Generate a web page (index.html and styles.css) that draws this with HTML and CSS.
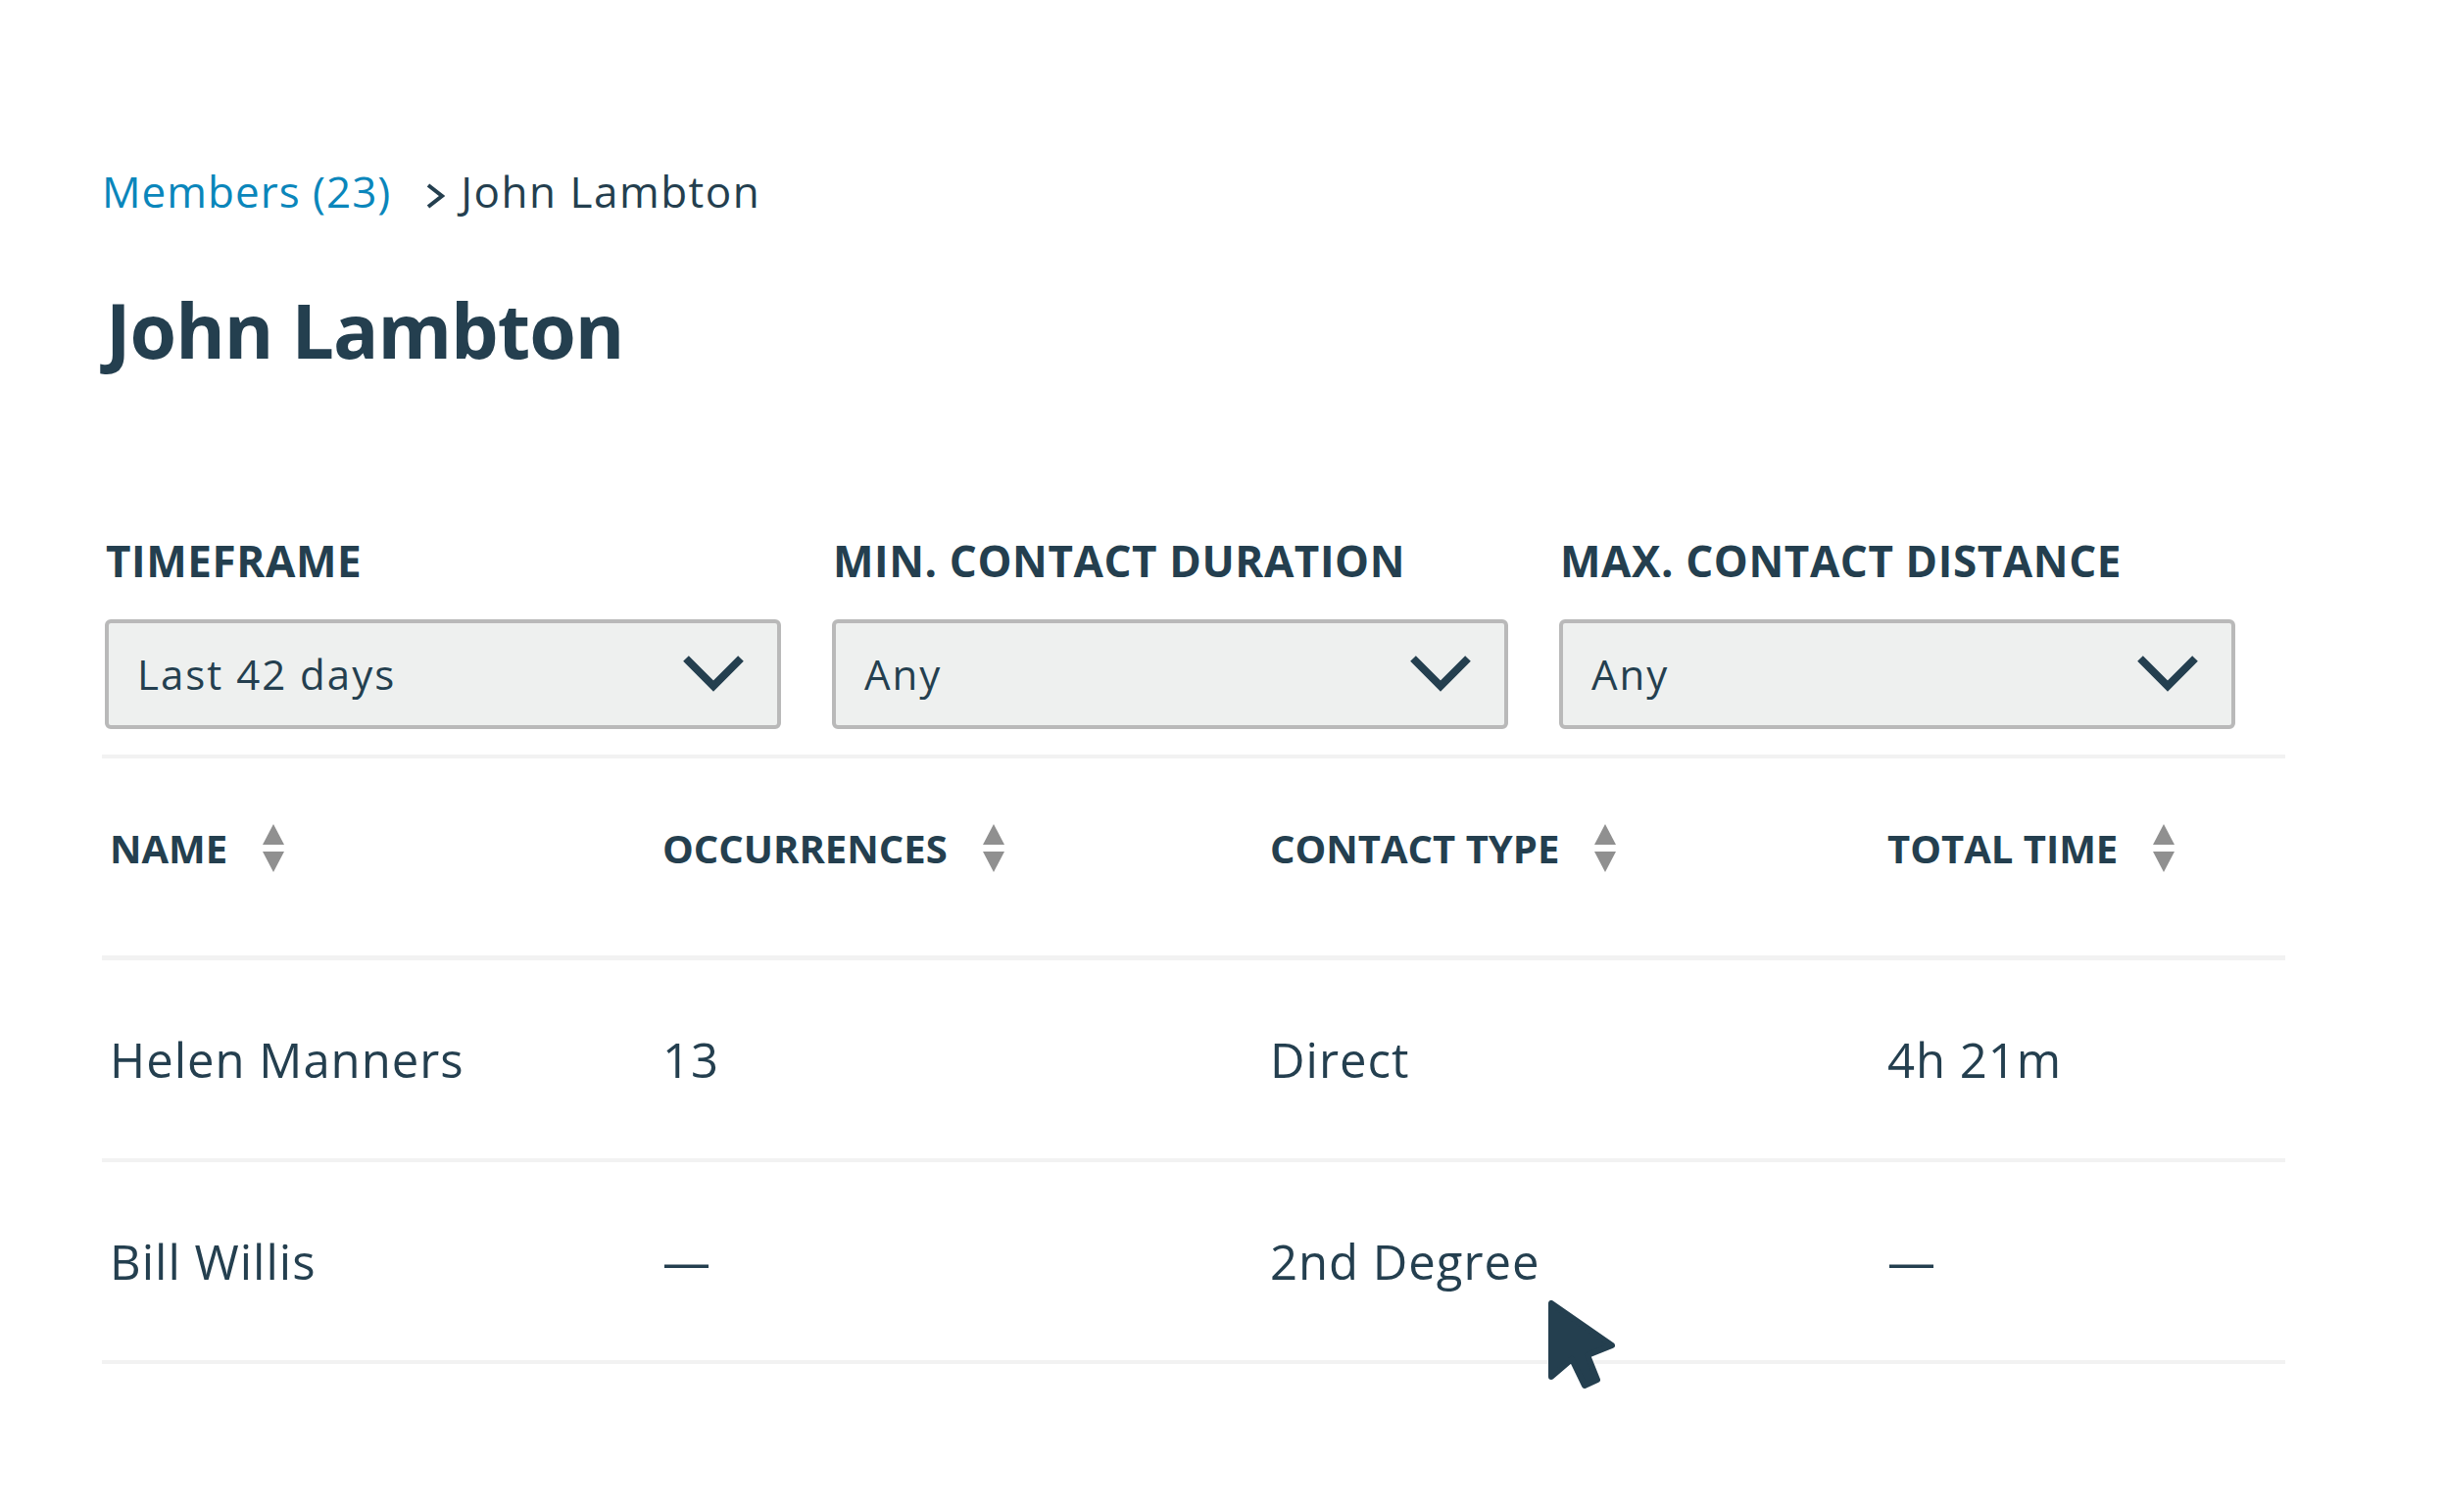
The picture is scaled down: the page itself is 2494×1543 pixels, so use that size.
FILE: index.html
```html
<!DOCTYPE html>
<html lang="en">
<head>
<meta charset="utf-8">
<title>John Lambton</title>
<link rel="stylesheet" href="styles.css">
</head>
<body>
<main class="page">
  <nav class="breadcrumb">
    <a class="crumb-link" href="#">Members (23)</a>
    <svg class="crumb-sep" viewBox="0 0 20 26" aria-hidden="true"><path d="M3 2 L17 13 L3 24"/></svg>
    <span class="crumb-current">John Lambton</span>
  </nav>

  <h1 class="title">John Lambton</h1>

  <section class="filters">
    <div class="filter">
      <div class="filter-label">TIMEFRAME</div>
      <div class="select">
        <span class="select-value">Last 42 days</span>
        <svg class="chevron" viewBox="0 0 62 38" aria-hidden="true"><path d="M3 3 L31 31 L59 3"/></svg>
      </div>
    </div>
    <div class="filter">
      <div class="filter-label">MIN. CONTACT DURATION</div>
      <div class="select">
        <span class="select-value">Any</span>
        <svg class="chevron" viewBox="0 0 62 38" aria-hidden="true"><path d="M3 3 L31 31 L59 3"/></svg>
      </div>
    </div>
    <div class="filter">
      <div class="filter-label">MAX. CONTACT DISTANCE</div>
      <div class="select">
        <span class="select-value">Any</span>
        <svg class="chevron" viewBox="0 0 62 38" aria-hidden="true"><path d="M3 3 L31 31 L59 3"/></svg>
      </div>
    </div>
  </section>

  <div class="table">
    <div class="row head">
      <div class="th">NAME<svg class="sort" viewBox="0 0 22 50" aria-hidden="true"><path d="M11 0 L22 21 L0 21 Z M0 28 L22 28 L11 49 Z"/></svg></div>
      <div class="th">OCCURRENCES<svg class="sort" viewBox="0 0 22 50" aria-hidden="true"><path d="M11 0 L22 21 L0 21 Z M0 28 L22 28 L11 49 Z"/></svg></div>
      <div class="th">CONTACT TYPE<svg class="sort" viewBox="0 0 22 50" aria-hidden="true"><path d="M11 0 L22 21 L0 21 Z M0 28 L22 28 L11 49 Z"/></svg></div>
      <div class="th">TOTAL TIME<svg class="sort" viewBox="0 0 22 50" aria-hidden="true"><path d="M11 0 L22 21 L0 21 Z M0 28 L22 28 L11 49 Z"/></svg></div>
    </div>
    <div class="row">
      <div class="td">Helen Manners</div>
      <div class="td">13</div>
      <div class="td">Direct</div>
      <div class="td">4h 21m</div>
    </div>
    <div class="row">
      <div class="td">Bill Willis</div>
      <div class="td">—</div>
      <div class="td">2nd Degree</div>
      <div class="td">—</div>
    </div>
  </div>

  <svg class="cursor" viewBox="0 0 70 92" aria-hidden="true"><path d="M3 3 L3 78 L24 60 L37 87 L50 81 L40 56 L65 46 Z"/></svg>
</main>
</body>
</html>
```

FILE: styles.css
```css
html, body {
  margin: 0;
  padding: 0;
  background: #ffffff;
}

body {
  font-family: "Open Sans", "Noto Sans", "Liberation Sans", sans-serif;
  color: #243f4f;
}

.page {
  position: relative;
  box-sizing: border-box;
  min-height: 1543px;
  padding: 165px 0 0 104px;
  width: 2494px;
}

.breadcrumb {
  display: flex;
  align-items: center;
  font-size: 44px;
  line-height: 60px;
  height: 60px;
  font-weight: 500;
}

.crumb-link {
  color: #0a86bb;
  text-decoration: none;
  letter-spacing: 1px;
}

.crumb-sep {
  width: 20px;
  height: 26px;
  margin: 10px 16px 0 35px;
  fill: none;
  stroke: #243f4f;
  stroke-width: 4;
}

.crumb-current {
  color: #243f4f;
  letter-spacing: 1.5px;
}

.title {
  margin: 62px 0 0 4px;
  font-size: 77px;
  line-height: 100px;
  font-weight: 700;
  letter-spacing: -1px;
}

.filters {
  display: grid;
  grid-template-columns: repeat(3, 690px);
  column-gap: 52px;
  margin: 155px 0 0 3px;
}

.filter-label {
  font-size: 44px;
  line-height: 60px;
  font-weight: 700;
  letter-spacing: 0.6px;
  padding-left: 1px;
}

.select {
  box-sizing: border-box;
  margin-top: 30px;
  height: 112px;
  border: 4px solid #b9b9b9;
  border-radius: 6px;
  background: #eef0ef;
  display: flex;
  align-items: center;
  justify-content: space-between;
  padding: 0 34px 0 29px;
}

.select-value {
  font-size: 42px;
  line-height: 58px;
  font-weight: 500;
  letter-spacing: 2px;
}

.chevron {
  width: 62px;
  height: 38px;
  fill: none;
  stroke: #243f4f;
  stroke-width: 8;
}

.table {
  width: 2228px;
  margin-top: 26px;
  border-top: 4px solid #f2f2f2;
}

.row {
  box-sizing: border-box;
  display: grid;
  grid-template-columns: 564px 620px 630px 1fr;
  align-items: center;
  height: 206px;
  padding-left: 8px;
  border-bottom: 4px solid #f2f2f2;
}

.row.head {
  height: 206px;
  border-bottom-width: 5px;
  padding-bottom: 17px;
}

.th {
  display: flex;
  align-items: center;
  font-size: 40px;
  line-height: 56px;
  font-weight: 700;
}

.sort {
  width: 22px;
  height: 50px;
  margin-left: 36px;
  fill: #909090;
}

.td {
  font-size: 49px;
  line-height: 66px;
  font-weight: 500;
  letter-spacing: 1px;
}

.cursor {
  position: absolute;
  left: 1580px;
  top: 1327px;
  width: 70px;
  height: 92px;
  fill: #243f4f;
  stroke: #243f4f;
  stroke-width: 6;
  stroke-linejoin: round;
}
```
